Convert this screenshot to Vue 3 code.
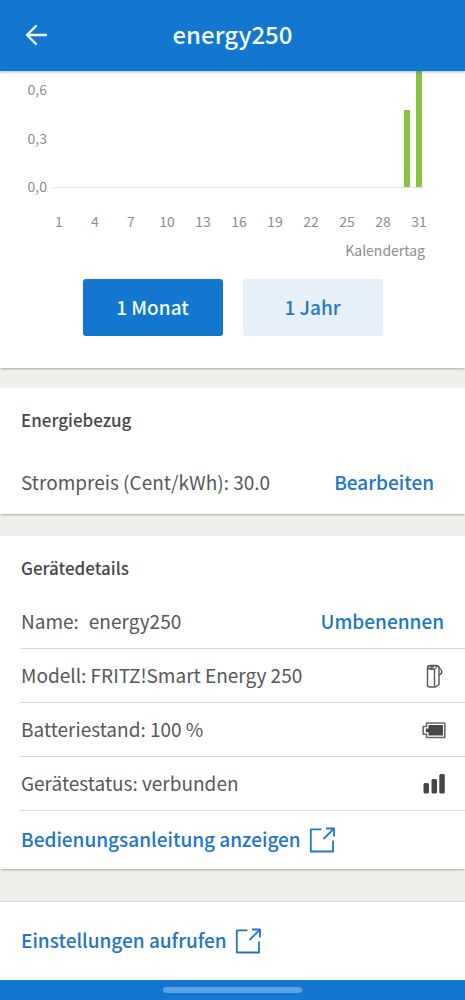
<script setup>
const scale = ['0,6', '0,3', '0,0']
const fullScale = 0.72
const days = Array.from({ length: 31 }, (_, i) => ({
  day: i + 1,
  label: i % 3 === 0 ? String(i + 1) : '',
  value: i === 29 ? 0.475 : i === 30 ? 0.72 : 0,
}))
const barHeight = (value) => `${(value / fullScale) * 100}%`
</script>

<template>
  <div class="screen">
    <header class="topbar">
      <button class="back" type="button" aria-label="Zurück">
        <svg width="24" height="24" viewBox="0 0 24 24" fill="none" stroke="currentColor" stroke-width="2.400" stroke-linecap="round" stroke-linejoin="round">
          <path d="M22 11H3M12 2L3 11l9 9" />
        </svg>
      </button>
      <h1>energy250</h1>
    </header>

    <main>
      <section class="card usage">
        <div class="chart">
          <div class="scale">
            <span v-for="s in scale" :key="s">{{ s }}</span>
          </div>
          <div class="plot">
            <div v-for="d in days" :key="d.day" class="slot">
              <div v-if="d.value" class="bar" :style="{ height: barHeight(d.value) }"></div>
            </div>
          </div>
          <div class="days">
            <span v-for="d in days" :key="d.day">{{ d.label }}</span>
          </div>
          <div class="caption">Kalendertag</div>
        </div>
        <div class="range">
          <button class="active" type="button">1 Monat</button>
          <button type="button">1 Jahr</button>
        </div>
      </section>

      <section class="card price">
        <h2>Energiebezug</h2>
        <div class="row price-row">
          <span>Strompreis (Cent/kWh): 30.0</span>
          <button class="action" type="button">Bearbeiten</button>
        </div>
      </section>

      <section class="card details">
        <h2>Gerätedetails</h2>
        <div class="row name-row">
          <span class="pair"><span>Name:</span><span>energy250</span></span>
          <button class="action" type="button">Umbenennen</button>
        </div>
        <div class="row">
          <span>Modell: FRITZ!Smart Energy 250</span>
          <svg width="26" height="26" viewBox="0 0 26 26" fill="none" stroke="#55585a" stroke-width="1.400" stroke-linejoin="round">
            <path d="M6.500 4.500Q6.500 2.500 9 2.500h6q3 0 3 2.500v16.500l-3.500 2.500H8.500q-2 0-2-2z" />
            <path d="M6.500 4.500Q8 6.500 13.500 6.200M13.500 6.200V23.500M13.500 6.200Q15.500 5.500 15.500 3" />
            <path d="M8.500 3.200h4.500l-1.800 2.200z" fill="#55585a" stroke-width=".8" />
            <path d="M18 4.500q2.800 2 2.800 4.300T18 12.200" />
          </svg>
        </div>
        <div class="row">
          <span>Batteriestand: 100 %</span>
          <svg width="26" height="26" viewBox="0 0 26 26" fill="none">
            <path d="M5.500 6h18.300v14.500H5.500V17.300H2.200V9.500h3.300z" stroke="#66696b" stroke-width="1.600" stroke-linejoin="round" />
            <path d="M7.500 8H22v10.500H7.500v-3.200H4.800v-3.800h2.700z" fill="#45484a" />
          </svg>
        </div>
        <div class="row">
          <span>Gerätestatus: verbunden</span>
          <svg width="26" height="26" viewBox="0 0 26 26" fill="#45484a">
            <rect x="2.500" y="12" width="5.500" height="10.500" rx="1.500" />
            <rect x="10.500" y="8" width="5.500" height="14.500" rx="1.500" />
            <rect x="18.300" y="3" width="5.500" height="19.500" rx="1.500" />
          </svg>
        </div>
        <div class="row link-row">
          <a class="action" href="#anleitung">
            <span>Bedienungsanleitung anzeigen</span>
            <svg width="26" height="26" viewBox="0 0 26 26" fill="none" stroke="currentColor" stroke-width="1.800" stroke-linejoin="round">
              <path d="M12.500 2.300H1.800V24.500H24V13.500" />
              <path d="M14.500 12L24.700 1.800M17 1.500h8V9.500" />
            </svg>
          </a>
        </div>
      </section>

      <section class="card settings">
        <a class="action" href="#einstellungen">
          <span>Einstellungen aufrufen</span>
          <svg width="26" height="26" viewBox="0 0 26 26" fill="none" stroke="currentColor" stroke-width="1.800" stroke-linejoin="round">
            <path d="M12.500 2.300H1.800V24.500H24V13.500" />
            <path d="M14.500 12L24.700 1.800M17 1.500h8V9.500" />
          </svg>
        </a>
      </section>
    </main>

    <footer class="navbar"><span></span></footer>
  </div>
</template>

<style>
body {
  background: #f0eeea;
}
</style>

<style scoped>
.screen {
  display: flex;
  flex-direction: column;
  min-height: 100vh;
  font-family: "Noto Sans CJK SC", "Noto Sans", sans-serif;
  font-size: 19px;
  line-height: 24px;
  color: #55585a;
}
button {
  font: inherit;
  border: 0;
  padding: 0;
  background: none;
  cursor: pointer;
}
h1,
h2 {
  margin: 0;
}
.topbar {
  display: grid;
  grid-template-columns: 48px 1fr 48px;
  align-items: center;
  height: 71px;
  padding: 0 12px;
  box-sizing: border-box;
  background: #1477cf;
  color: #f2fbff;
  box-shadow: 0 1px 3px rgba(20, 60, 110, 0.35);
  z-index: 1;
}
.back {
  display: flex;
  justify-content: center;
  color: inherit;
}
.topbar h1 {
  padding-bottom: 4px;
  font-size: 24px;
  line-height: 28px;
  font-weight: 500;
  text-align: center;
}
main {
  flex: 1;
  display: flex;
  flex-direction: column;
}
.card {
  background: #fff;
  box-shadow: 0 2px 2px -1px rgba(70, 65, 55, 0.4);
}
.usage {
  padding-bottom: 32px;
  margin-bottom: 20px;
}
.chart {
  display: grid;
  grid-template-columns: 53px 1fr;
  padding-right: 40px;
  font-size: 14px;
  line-height: 16px;
  color: #8c8c8c;
}
.scale {
  display: flex;
  flex-direction: column;
  justify-content: space-between;
  align-items: flex-end;
  padding: 10px 6px 0 0;
  height: 113px;
}
.plot {
  display: flex;
  height: 116px;
  border-bottom: 1px solid #e2e2e2;
}
.slot {
  flex: 1;
  display: flex;
  justify-content: center;
  align-items: flex-end;
}
.bar {
  width: 6px;
  background: #86c440;
}
.days {
  grid-column: 2;
  display: flex;
  margin-top: 19px;
}
.days span {
  flex: 1 1 0;
  min-width: 0;
  display: flex;
  justify-content: center;
}
.caption {
  grid-column: 2;
  margin-top: 13px;
  text-align: right;
}
.range {
  display: flex;
  justify-content: center;
  gap: 20px;
  margin-top: 21px;
}
.range button {
  width: 140px;
  height: 57px;
  padding-bottom: 2px;
  border-radius: 3px;
  background: #e7f1fb;
  color: #2878bf;
  font-weight: 500;
}
.range .active {
  background: #1477cf;
  color: #f2fbff;
}
h2 {
  font-size: 17px;
  line-height: 24px;
  font-weight: 500;
  color: #45484a;
  padding-left: 21px;
}
.price {
  padding-top: 20px;
  margin-bottom: 22px;
}
.row {
  display: flex;
  align-items: center;
  justify-content: space-between;
  height: 54px;
  box-sizing: border-box;
  margin-left: 20px;
  padding: 0 18px 0 1px;
  border-bottom: 1px solid #dcdcdc;
}
.row > span,
.row > button,
.action > span {
  padding-bottom: 2px;
}
.price-row {
  height: 62px;
  margin-top: 20px;
  padding-right: 31px;
  border: 0;
}
.details {
  padding-top: 20px;
  margin-bottom: 32px;
}
.name-row {
  margin-top: 15px;
  padding-right: 21px;
}
.pair {
  display: flex;
  gap: 10px;
}
.link-row {
  height: 58px;
  border: 0;
}
.action {
  display: inline-flex;
  align-items: center;
  gap: 8px;
  color: #2076c4;
  font-weight: 500;
  text-decoration: none;
}
.settings {
  flex: 1;
  display: flex;
  align-items: center;
  padding-left: 21px;
  border-top: 1px solid #dddbd8;
}
.navbar {
  display: flex;
  justify-content: center;
  align-items: center;
  height: 20px;
  background: #1477cf;
  z-index: 1;
}
.navbar span {
  width: 30%;
  height: 6px;
  border-radius: 3px;
  background: #5ba3e4;
}
</style>
